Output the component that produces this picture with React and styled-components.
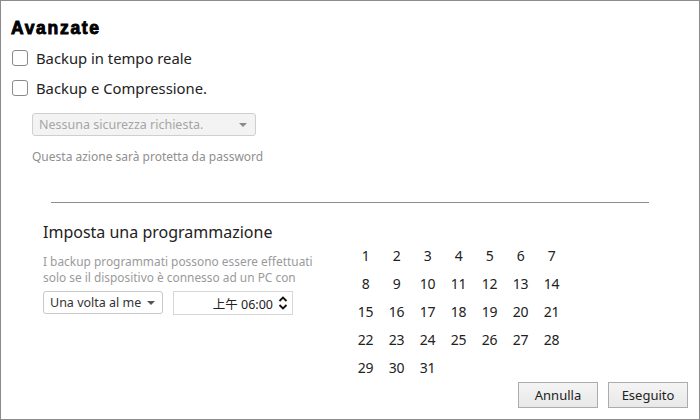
import React from "react";
import styled, { createGlobalStyle } from "styled-components";

const Global = createGlobalStyle`
  html, body { margin: 0; padding: 0; background: #fff; }
  body { font-family: "Noto Sans", "Noto Sans CJK SC", sans-serif; }
  * { box-sizing: border-box; }
`;

const Window = styled.div`
  width: 700px;
  height: 420px;
  border: 1px solid #8c8c8c;
  background: #fff;
  display: flex;
  flex-direction: column;
  padding: 17px 11px 0 10px;
  color: #222;
`;

const Heading = styled.h1`
  margin: 0;
  font-family: "Liberation Sans", Arial, sans-serif;
  font-weight: 700;
  font-size: 17.5px;
  line-height: 20px;
  letter-spacing: 1.7px;
  -webkit-text-stroke: 0.9px #000;
  color: #000;
`;

const CheckList = styled.div`
  display: flex;
  flex-direction: column;
  gap: 10px;
  margin-top: 10px;
`;

const CheckRow = styled.label`
  display: flex;
  align-items: center;
  gap: 8px;
  height: 20px;
  font-size: 14.8px;
  color: #222;
`;

const Box = styled.span`
  width: 16px;
  height: 16px;
  border: 1px solid #8a8a8a;
  border-radius: 3px;
  background: #fff;
  margin-left: 1px;
`;

const Indented = styled.div`
  padding-left: 21px;
  display: flex;
  flex-direction: column;
`;

const SelectWrap = styled.div`
  margin-top: 15px;
`;

const Select = styled.div`
  width: ${(p) => p.$w}px;
  height: 23px;
  border: 1px solid ${(p) => (p.$disabled ? "#cfcfcf" : "#c8c8c8")};
  border-radius: 3px;
  background: ${(p) => (p.$disabled ? "#f3f3f3" : "#fff")};
  color: ${(p) => (p.$disabled ? "#a6a6a6" : "#333")};
  font-size: 12.5px;
  display: flex;
  align-items: center;
  justify-content: space-between;
  padding: 0 8px 0 6px;
  overflow: hidden;
  white-space: nowrap;
`;

const Caret = styled.span`
  width: 0;
  height: 0;
  border-left: 4px solid transparent;
  border-right: 4px solid transparent;
  border-top: 4px solid ${(p) => p.$c};
  flex: none;
  margin-left: 6px;
`;

const Note = styled.div`
  margin-top: 13px;
  font-size: 12px;
  color: #8f8f8f;
  line-height: 16px;
`;

const Divider = styled.hr`
  margin: 37px 39px 0 40px;
  border: none;
  border-top: 1px solid #8c8c8c;
  height: 0;
`;

const Bottom = styled.div`
  display: flex;
  margin-top: 17px;
  padding-left: 32px;
`;

const LeftCol = styled.div`
  width: 307px;
  display: flex;
  flex-direction: column;
`;

const Title = styled.div`
  font-size: 16px;
  color: #222;
  line-height: 24px;
  font-weight: 400;
`;

const Desc = styled.div`
  margin-top: 9px;
  font-size: 11.9px;
  line-height: 16px;
  color: #9a9a9a;
  white-space: nowrap;
`;

const Controls = styled.div`
  display: flex;
  gap: 10px;
  margin-top: 6px;
`;

const TimeBox = styled.div`
  width: 120px;
  height: 24px;
  border: 1px solid #d6d6d6;
  display: flex;
  align-items: center;
  justify-content: flex-end;
  padding-right: 4px;
  font-size: 12.5px;
  color: #222;
  gap: 5px;
`;

const RightCol = styled.div`
  flex: 1;
  display: flex;
  flex-direction: column;
  padding-top: 21px;
`;

const Grid = styled.div`
  display: grid;
  grid-template-columns: repeat(7, 31px);
  grid-auto-rows: 28px;
  width: max-content;
`;

const Day = styled.div`
  font-size: 14px;
  color: #222;
  display: flex;
  align-items: center;
  justify-content: center;
  letter-spacing: -0.3px;
`;

const Footer = styled.div`
  display: flex;
  justify-content: flex-end;
  gap: 10px;
  margin-top: 1px;
`;

const Button = styled.button`
  width: 80px;
  height: 26px;
  border: 1px solid #acacac;
  background: linear-gradient(#f4f4f4, #e8e8e8);
  font-family: "Noto Sans", sans-serif;
  font-size: 13px;
  color: #222;
  padding: 0;
  border-radius: 0;
`;

const Spinner = () => (
  <svg width="10" height="16" viewBox="0 0 10 16">
    <path d="M1.5 6 L5 2.5 L8.5 6" fill="none" stroke="#111" strokeWidth="1.8" />
    <path d="M1.5 10 L5 13.5 L8.5 10" fill="none" stroke="#111" strokeWidth="1.8" />
  </svg>
);

export default function App() {
  const days = Array.from({ length: 31 }, (_, i) => i + 1);
  return (
    <>
      <Global />
      <Window>
        <Heading>Avanzate</Heading>
        <CheckList>
          <CheckRow>
            <Box />
            Backup in tempo reale
          </CheckRow>
          <CheckRow>
            <Box />
            Backup e Compressione.
          </CheckRow>
        </CheckList>
        <Indented>
          <SelectWrap>
            <Select $w={224} $disabled>
              Nessuna sicurezza richiesta.
              <Caret $c="#8a8a8a" />
            </Select>
          </SelectWrap>
          <Note>Questa azione sarà protetta da password</Note>
        </Indented>
        <Divider />
        <Bottom>
          <LeftCol>
            <Title>Imposta una programmazione</Title>
            <Desc>
              I backup programmati possono essere effettuati
              <br />
              solo se il dispositivo è connesso ad un PC con
            </Desc>
            <Controls>
              <Select $w={120}>
                Una volta al me
                <Caret $c="#555" />
              </Select>
              <TimeBox>
                <span>上午 06:00</span>
                <Spinner />
              </TimeBox>
            </Controls>
          </LeftCol>
          <RightCol>
            <Grid>
              {days.map((d) => (
                <Day key={d}>{d}</Day>
              ))}
            </Grid>
            <Footer>
              <Button>Annulla</Button>
              <Button>Eseguito</Button>
            </Footer>
          </RightCol>
        </Bottom>
      </Window>
    </>
  );
}
